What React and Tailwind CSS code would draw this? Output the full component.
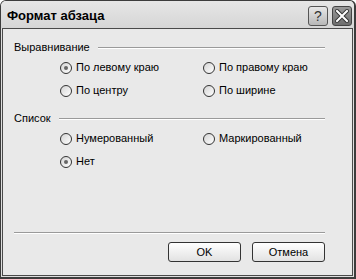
import React from "react";

const font = { fontFamily: '"Liberation Sans", Arial, sans-serif' };

const Radio = ({ label, checked }) => (
  <div className="flex h-[15px] items-center gap-[4px]">
    <span className="flex h-[12px] w-[12px] items-center justify-center rounded-full border border-[#333] bg-gradient-to-br from-[#d4d4d4] to-white">
      {checked && <span className="h-[4px] w-[4px] rounded-full bg-[#666]" />}
    </span>
    <span className="text-[11px] leading-none text-black">{label}</span>
  </div>
);

const GroupHeader = ({ title, className }) => (
  <div className={`flex h-[13px] items-center ${className}`}>
    <span className="text-[11px] leading-none text-black">{title}</span>
    <div className="ml-[8px] flex-1 border-t border-b border-t-[#9a9a9a] border-b-white" />
  </div>
);

const Button = ({ children }) => (
  <button className="flex h-[20px] w-[73px] items-center justify-center rounded-[3px] border border-[#333] bg-gradient-to-b from-white to-[#e2e2e2] text-[11px] leading-none text-black">
    {children}
  </button>
);

export default function App() {
  return (
    <div
      style={font}
      className="flex h-[279px] w-[356px] flex-col rounded-t-[6px] border-t border-l border-r-2 border-b-2 border-[#3c3c3c] bg-[#dedede]"
    >
      {/* Title bar */}
      <div className="flex h-[27px] items-center justify-between pl-[6px] pr-[2px] pt-[2px] bg-gradient-to-b from-[#e6e6e6] to-[#d6d6d6] rounded-t-[5px]">
        <span className="text-[13px] font-bold text-black">Формат абзаца</span>
        <div className="flex gap-[4px]">
          <div className="flex h-[20px] w-[20px] items-center justify-center rounded-[3px] border border-[#555] bg-gradient-to-b from-[#e8e8e8] to-[#b8b8b8] text-[14px] leading-none text-[#333]">
            ?
          </div>
          <div className="flex h-[20px] w-[20px] items-center justify-center rounded-[3px] border border-[#444] bg-gradient-to-b from-[#9a9a9a] to-[#6e6e6e]">
            <svg width="14" height="14" viewBox="0 0 14 14">
              <path d="M2 2 L12 12 M12 2 L2 12" stroke="#333" strokeWidth="4" strokeLinecap="square" />
              <path d="M2 2 L12 12 M12 2 L2 12" stroke="#fff" strokeWidth="2" strokeLinecap="square" />
            </svg>
          </div>
        </div>
      </div>

      {/* Client area */}
      <div className="mx-[1px] mb-[1px] flex flex-1 flex-col border border-[#4a4a4a] bg-[#e9e9e9] pl-[11px] pr-[27px] pt-[12px] pb-[13px]">
        <GroupHeader title="Выравнивание" />
        <div className="mt-[6px] grid grid-cols-[143px_1fr] gap-y-[8px] pl-[46px]">
          <Radio label="По левому краю" checked />
          <Radio label="По правому краю" />
          <Radio label="По центру" />
          <Radio label="По ширине" />
        </div>

        <GroupHeader title="Список" className="mt-[14px]" />
        <div className="mt-[6px] grid grid-cols-[143px_1fr] gap-y-[8px] pl-[46px]">
          <Radio label="Нумерованный" />
          <Radio label="Маркированный" />
          <Radio label="Нет" checked />
        </div>

        <div className="flex-1" />
        <div className="border-t border-b border-t-[#9a9a9a] border-b-white" />
        <div className="mt-[8px] flex justify-end gap-[11px]">
          <Button>OK</Button>
          <Button>Отмена</Button>
        </div>
      </div>
    </div>
  );
}
